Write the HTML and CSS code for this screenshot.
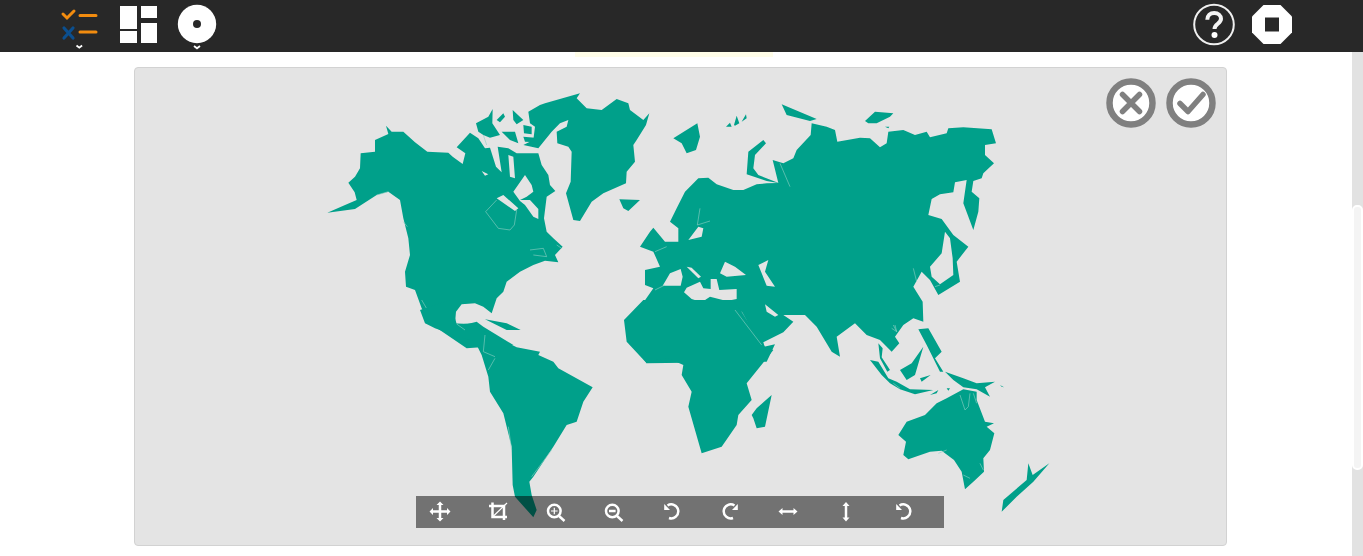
FILE: index.html
```html
<!DOCTYPE html>
<html lang="en">
<head>
<meta charset="utf-8">
<title>Map crop editor</title>
<link rel="stylesheet" href="styles.css">
</head>
<body>
<header class="topbar">
  <div class="topbar-group topbar-left">
    <svg class="ico-checklist" viewBox="0 0 40 52">
      <path class="s-orange" d="M3 14l4 4 7-7"/><path class="s-orange" d="M20 15.500h16M20 32h16"/>
      <path class="s-blue" d="M4 28l9 10M13 28l-9 10"/>
      <path class="s-chev" d="M16.500 45.500l2.800 2.200 2.800-2.200"/>
    </svg>
    <svg class="ico-dash" viewBox="0 0 38 52">
      <path class="f-white" d="M0 6h17v23H0zM0 31h17v12H0zM21 6h16v12H21zM21 23h16v20H21z"/>
    </svg>
    <svg class="ico-disc" viewBox="0 0 40 52">
      <circle class="f-white" cx="20" cy="24" r="19.200"/><circle class="f-dark" cx="20" cy="24" r="4"/>
      <path class="s-chev-dark" d="M16.500 45l3.500 2.800 3.500-2.800"/><path class="s-chev" d="M17 46l3 2.300 3-2.300"/>
    </svg>
  </div>
  <div class="topbar-group topbar-right">
    <svg class="ico-help" viewBox="0 0 44 52">
      <circle class="s-ring" cx="22" cy="24.500" r="19.800"/>
      <path class="s-q" d="M15.300 19.800c0-4.200 3-6.800 6.900-6.800 4 0 6.800 2.500 6.800 5.800 0 5-6.500 5-6.500 10.200"/>
      <circle class="f-white" cx="22.500" cy="35" r="3"/>
    </svg>
    <svg class="ico-stop" viewBox="0 0 40 52">
      <path class="f-white" d="M11.500 5h17L40 16.500v16L28.500 44h-17L0 32.500v-16z"/><path class="f-dark" d="M13 17.500h14v14H13z"/>
    </svg>
  </div>
</header>
<div class="body-row">
  <main class="stage">
    <div class="glow"></div>
    <section class="card">
      <svg class="map" viewBox="134 67 1093 479">
        <g class="land" transform="translate(320 85) scale(.33333)">
          <path d="M22 383L70 362 110 345 104 322 85 293 105 275 120 250 122 205 165 200 165 165 205 147 198 122 215 140 250 140 285 172 322 200 385 203 398 215 428 237 436 205 410 187 450 143 475 160 495 190 510 188 528 245 545 262 533 185 565 190 590 205 655 205 665 240 685 270 690 300 706 318 680 335 672 400 680 440 700 460 728 485 705 510 715 532 675 527 640 540 600 560 560 590 550 620 530 640 515 685 490 665 465 655 425 658 408 680 405 715 440 718 470 710 490 725 580 780 440 790 345 725 350 705 330 715 305 670 285 615 258 605 255 560 270 510 265 460 250 400 240 345 205 320 170 330 105 372z"/>
          <path d="M468 115L505 95 518 72 517 115 540 150 510 158 490 150 475 140zM530 105L550 85 555 95 540 112zM578 75L610 105 590 118 580 105zM610 120L635 125 635 148 612 145zM545 140L585 140 595 175 570 165zM610 155L645 158 650 172 615 170z"/>
          <path d="M625 80L660 60 675 55 780 25 770 40 800 70 845 75 890 42 925 55 930 75 970 105 988 85 978 120 950 165 940 180 945 230 920 260 918 295 850 325 815 350 780 408 760 405 738 325 752 290 755 200 745 185 712 175 710 140 740 125 745 105 720 115 695 140 655 190 610 180 640 165 645 125 630 115z"/>
          <path d="M495 703L560 715 602 735 560 735zM898 343L960 345 925 378 910 370z"/>
          <path class="hole" d="M565 210L580 215 585 280 570 275zM580 320L615 270 635 300 640 320 620 335 600 345 630 345 655 372 655 402 640 395 615 360 600 348zM530 340L550 330 595 370 585 378zM485 258L505 268 495 272z"/>
          <path class="thin" d="M497 380L530 345M590 375L583 420 570 435 535 430 497 380M630 495L670 490 680 515 640 510M305 645L340 705M205 320L170 330M250 410L262 425M490 150L500 180M710 480L725 490"/>
        </g>
        <g class="land" transform="translate(620 95) scale(.33333)">
          <path d="M160 130L232 85 240 125 228 165 200 175 185 145zM318 95L330 83 335 95zM342 90L350 62 358 85 345 92zM365 80L378 58 380 70zM380 238L385 170 430 135 438 145 405 180 400 220 415 240 478 265 440 258zM485 28L590 72 570 78 500 60zM735 78L765 50 820 55 810 65 770 85 745 85zM795 95L808 95 805 100z"/>
          <path d="M150 380L170 340 195 290 235 250 265 248 290 268 340 285 370 285 410 268 440 265 475 264 458 195 490 205 520 190 530 165 572 120 575 85 620 95 645 105 652 140 720 128 750 130 780 157 800 145 805 110 850 105 885 120 920 110 930 127 980 115 985 100 1030 97 1115 103 1128 145 1095 150 1095 180 1122 205 1090 235 1085 250 1060 258 1055 290 1078 310 1075 350 1060 405 1030 325 1040 255 1005 262 1000 292 960 298 935 312 925 360 965 372 1000 420 1045 455 1010 500 1020 560 955 600 930 555 905 530 880 575 908 620 910 680 880 670 850 690 825 725 838 745 815 770 780 735 740 720 705 685 650 725 660 785 635 770 590 695 555 660 490 660 520 680 490 712 430 742 432 755 465 748 440 800 80 805 25 730 15 680 65 630 100 580 75 570 75 525 120 515 100 470 60 455 90 410 100 398 135 440 175 440 175 400z"/>
          <path class="hole" d="M975 410L990 430 998 490 1000 540 960 568 935 545 930 515 965 475zM300 535L315 500 345 515 378 540 320 545zM415 510L445 495 435 530 465 575 440 572zM435 628L475 660 465 665 440 650zM128 572L150 535 182 522 188 545 182 572zM200 515L215 518 243 545 235 550zM192 592L200 578 240 560 250 580 272 582 272 552 290 552 298 585 350 582 350 612 320 618 270 605 245 622 215 612zM205 435L235 395 250 400 245 425z"/>
          <path class="thin" d="M345 645L430 750M365 650L410 735M240 340L232 390 270 378M880 520L890 560M105 470L140 455M105 585L135 570M480 205L510 275M815 700L830 710 820 690M945 575L960 570"/>
        </g>
        <g class="land" transform="translate(420 300) scale(.33333)">
          <path d="M0 30L15 70 45 85 100 105 165 125 185 165 205 230 210 275 250 340 275 440 278 555 285 590 340 652 350 630 335 585 328 545 340 530 400 440 440 375 470 365 490 305 518 262 415 205 400 185 355 165 360 155 290 142 225 110 175 85 170 70 110 72 90 0z"/>
          <path d="M612 60L620 125 680 190 700 180 745 175 790 195 785 225 815 275 805 320 845 460 905 440 950 375 955 345 995 300 980 250 1060 150 1035 140 1030 130 980 60 940 0 670 0zM995 345L1010 325 1055 285 1035 380 1010 385 1000 355z"/>
          <path class="thin" d="M195 105L190 155 225 170M225 175L205 210M265 380L275 450M335 530L395 450M945 30L1025 135M110 72L135 90"/>
        </g>
        <g class="land" transform="translate(800 300) scale(.33333)">
          <path d="M235 130L248 145 245 172 270 210 262 215 240 175zM210 180L235 185 265 235 290 245 330 268 400 270 345 283 300 268 270 250 245 225zM300 210L335 190 370 140 345 225 320 240zM360 235L392 225 365 245zM355 88L385 85 425 155 405 175 430 215 420 215 395 165 380 135zM435 215L490 235 530 250 585 245 555 262 570 290 530 268 490 262 460 240zM600 255L612 262 605 260zM390 285L415 270 410 280zM440 265L450 265 445 272z"/>
          <path d="M490 268L530 275 530 300 555 365 582 370 560 380 583 400 570 450 550 475 552 515 520 545 495 568 485 515 462 480 425 452 390 455 325 478 310 465 318 425 295 405 320 365 375 345 410 310 440 295z"/>
          <path d="M605 635L610 600 680 540 685 490 698 525 748 490 700 545 650 590z"/>
          <path class="thin" d="M480 285L495 330 505 320 510 280M520 280L530 310M415 460L440 450M490 525L510 535M285 75L290 95M540 490L550 510M280 250L300 265"/>
        </g>
      </svg>
      <div class="actions">
        <svg class="action" viewBox="0 0 50 50"><circle class="ring" cx="25" cy="25" r="21.500"/><path class="mark" d="M16.500 16.500l17 17M33.500 16.500l-17 17"/></svg>
        <svg class="action" viewBox="0 0 50 50"><circle class="ring" cx="25" cy="25" r="21.500"/><path class="mark" d="M14 25.500l8 8 15-17"/></svg>
      </div>
      <div class="toolbar">
        <svg class="tool" viewBox="0 0 24 24"><path class="t" d="M12 4v15M4 11.500h16"/><path class="ts" d="M12 1.500l3.500 3.500h-7zM12 21.500l-3.500-3.500h7zM1.500 11.500L5 8v7zM22.500 11.500L19 15V8z"/></svg>
        <svg class="tool" viewBox="0 0 24 24"><path class="t" d="M3 6h15v14M6.500 2.500V17H21"/><path class="t1" d="M6.500 17L21 3"/></svg>
        <svg class="tool" viewBox="0 0 24 24"><circle class="t" cx="10.300" cy="11" r="6.300"/><path class="t" d="M15 16l5.500 5"/><path class="t1" d="M7 11h6.600M10.300 7.700v6.600"/></svg>
        <svg class="tool" viewBox="0 0 24 24"><circle class="t" cx="10.300" cy="11" r="6.300"/><path class="t" d="M15 16l5.500 5M7 11h6.600"/></svg>
        <svg class="tool" viewBox="0 0 24 24"><path class="t" d="M7.500 5.500A7 7 0 1 1 9 18"/><path class="ts" d="M4.200 4v6H10z"/></svg>
        <svg class="tool" viewBox="0 0 24 24"><path class="t" d="M16.500 5.500A7 7 0 1 0 15 18"/><path class="ts" d="M19.800 4v6H14z"/></svg>
        <svg class="tool" viewBox="0 0 24 24"><path class="t" d="M5 11.500h14"/><path class="ts" d="M2.500 11.500L6.500 8v7zM21.500 11.500L17.500 15V8z"/></svg>
        <svg class="tool" viewBox="0 0 24 24"><path class="t" d="M12 5v13"/><path class="ts" d="M12 2l3.500 4h-7zM12 21.500L8.500 17.500h7z"/></svg>
        <svg class="tool" viewBox="0 0 24 24"><path class="t" d="M7.500 5.500A7 7 0 1 1 9 18"/><path class="ts" d="M4.200 4v6H10z"/></svg>
      </div>
    </section>
  </main>
  <div class="scrollbar"><div class="thumb"></div></div>
</div>
</body>
</html>
```
FILE: styles.css
```css
* { box-sizing: border-box; }
html, body { margin: 0; height: 100%; overflow: hidden; background: #fff; font-family: "Liberation Sans", sans-serif; }
body { display: flex; flex-direction: column; }
svg { display: block; flex: none; }

.topbar { height: 52px; flex: none; background: #282828; display: flex; justify-content: space-between; padding: 0 71px 0 60px; }
.topbar-group { display: flex; }
.topbar-left { gap: 20px; }
.topbar-right { gap: 16px; }
.ico-checklist, .ico-disc, .ico-stop { width: 40px; height: 52px; }
.ico-dash { width: 38px; height: 52px; }
.ico-disc { margin-left: -1px; }
.ico-help { width: 44px; height: 52px; }
.f-white { fill: #fff; }
.f-dark { fill: #282828; }
.s-orange, .s-blue, .s-chev, .s-chev-dark, .s-ring, .s-q { fill: none; }
.s-orange { stroke: #f28c0f; stroke-width: 3; stroke-linecap: round; }
.s-blue { stroke: #0b4f8f; stroke-width: 3.200; stroke-linecap: round; }
.s-chev { stroke: #fff; stroke-width: 1.800; }
.s-chev-dark { stroke: #282828; stroke-width: 1.500; }
.s-ring { stroke: #f0f0f0; stroke-width: 2; }
.s-q { stroke: #f4f4f4; stroke-width: 4; }

.body-row { flex: 1; display: flex; min-height: 0; }
.stage { flex: 1; position: relative; padding: 15px 0 0 134px; }
.glow { position: absolute; top: 0; left: 575px; width: 198px; height: 5px; background: #fffde8; }
.scrollbar { width: 11px; background: #e2e2e2; position: relative; }
.thumb { position: absolute; left: 0; right: 0; top: 153px; height: 265px; background: #f4f4f4; border: 2px solid #fff; border-radius: 5px; }

.card { width: 1093px; height: 479px; position: relative; background: #e4e4e4; border: 1px solid #d2d2d2; border-radius: 4px; overflow: hidden; }
.map { position: absolute; top: -1px; left: -1px; width: 1093px; height: 479px; filter: blur(.5px); }
.land { fill: #00a08a; }
.land .hole { fill: #e4e4e4; }
.land .thin { fill: none; stroke: #8fd0c4; stroke-width: 1.800; }

.actions { position: absolute; top: 10px; right: 10px; display: flex; gap: 10px; }
.action { width: 50px; height: 50px; }
.ring { fill: #fff; stroke: #808080; stroke-width: 6.500; }
.mark { fill: none; stroke: #808080; stroke-width: 5.500; stroke-linecap: round; stroke-linejoin: round; }

.toolbar { position: absolute; left: 281px; bottom: 17px; width: 528px; height: 32px; background: rgba(0, 0, 0, .5); display: flex; align-items: center; gap: 34px; padding-left: 12px; }
.tool { width: 24px; height: 24px; }
.t { fill: none; stroke: #fff; stroke-width: 2.500; }
.t1 { fill: none; stroke: #fff; stroke-width: 1.200; }
.ts { fill: #fff; }
```
